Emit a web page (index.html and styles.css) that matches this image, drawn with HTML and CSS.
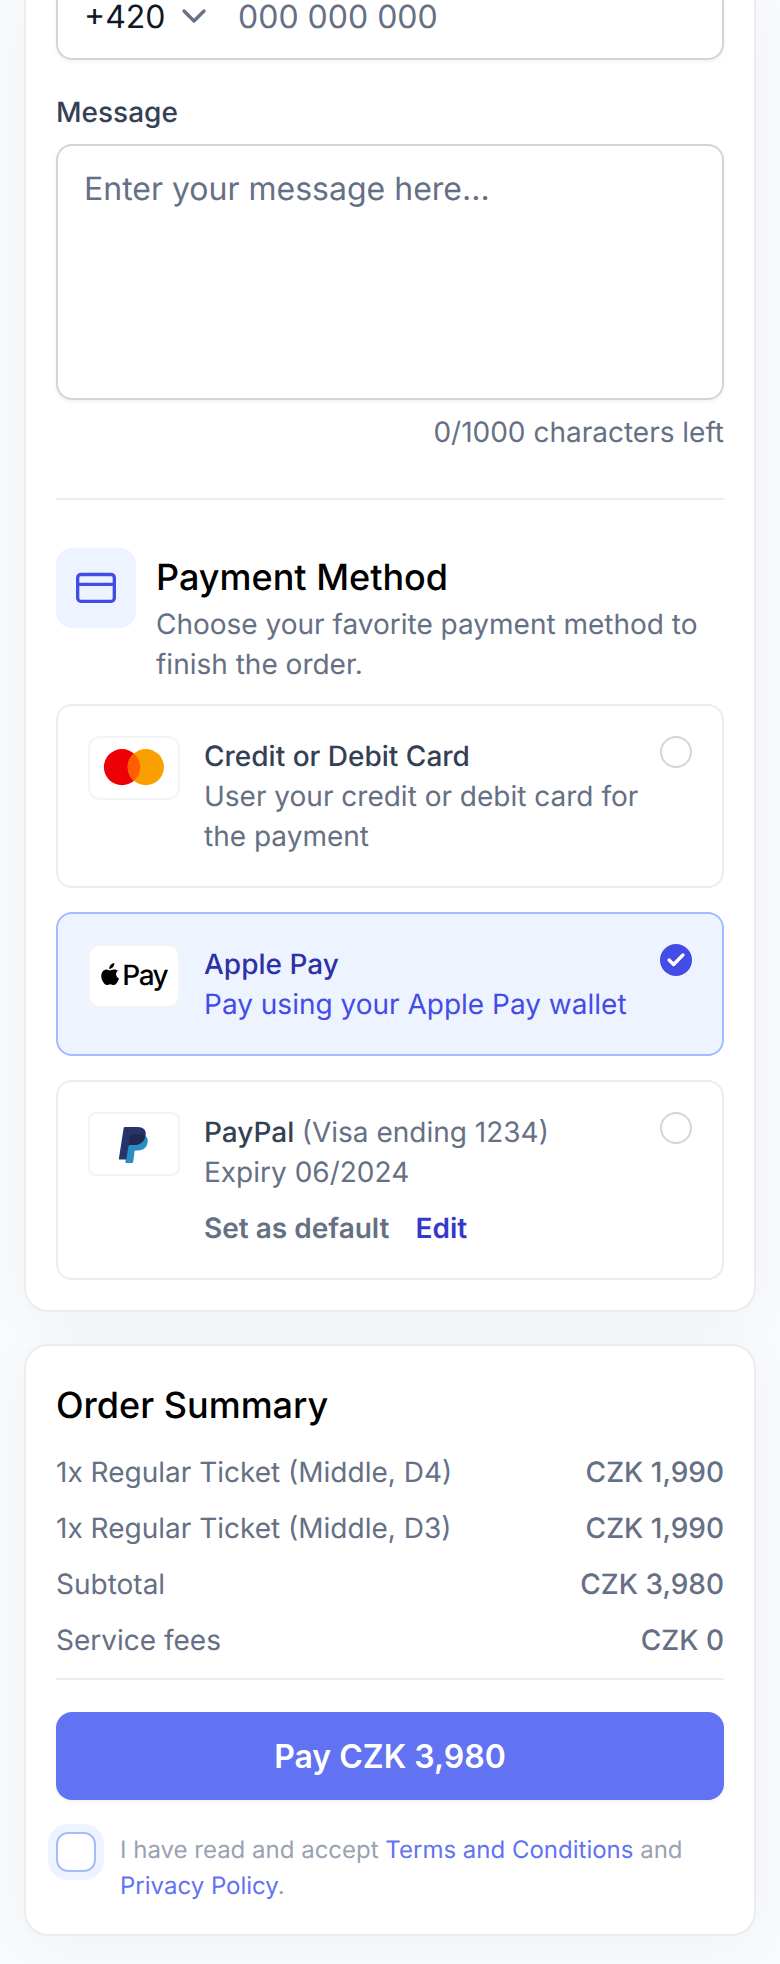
FILE: index.html
```html
<!DOCTYPE html>
<html lang="en">
<head>
<meta charset="utf-8">
<title>Checkout</title>
<link rel="stylesheet" href="styles.css">
</head>
<body>
<main class="page">
  <section class="card card-details">
    <div class="phone">
      <span class="phone-code">+420</span>
      <svg class="phone-chevron" width="40" height="40" viewBox="0 0 20 20" fill="none"><path d="M5 7.5l5 5 5-5"/></svg>
      <span class="phone-number">000 000 000</span>
    </div>
    <label class="label">Message</label>
    <div class="message">Enter your message here...</div>
    <p class="counter">0/1000 characters left</p>
    <hr class="divider">

    <header class="method-head">
      <span class="method-icon">
        <svg width="40" height="40" viewBox="0 0 40 40" fill="none"><rect x="1.67" y="6.5" width="36.66" height="26.8" rx="3.2"/><path d="M1.67 16.4h36.66"/></svg>
      </span>
      <div>
        <h2 class="title">Payment Method</h2>
        <p class="text">Choose your favorite payment method to finish the order.</p>
      </div>
    </header>

    <div class="options">
      <div class="option">
        <svg class="badge" viewBox="0 0 92 64">
          <rect class="badge-box" x="1" y="1" width="90" height="62" rx="11"/>
          <circle cx="34" cy="31.1" r="18.1" fill="#ed0006"/>
          <circle cx="57.8" cy="31.1" r="18.1" fill="#f9a000"/>
          <path d="M45.9 17.4a18.1 18.1 0 0 1 0 27.4a18.1 18.1 0 0 1 0-27.4z" fill="#ff5e00"/>
        </svg>
        <div class="option-body">
          <p class="option-name">Credit or Debit Card</p>
          <p class="text">User your credit or debit card for the payment</p>
        </div>
        <span class="radio"></span>
      </div>

      <div class="option option-selected">
        <svg class="badge" viewBox="0 0 92 64">
          <rect class="badge-box" x="1" y="1" width="90" height="62" rx="11"/>
          <path d="M26.3 19c.2 1.500-.4 3-1.300 4.100-.9 1.100-2.300 1.900-3.700 1.800-.2-1.400.5-2.900 1.300-3.900.9-1.100 2.500-1.900 3.700-2zM30.200 26.500c-1 .6-2.200 1.900-2.100 4 0 2.500 2 3.600 2.900 4-.4 1.500-1.200 3-2.100 4.300-.9 1.300-1.800 2.300-3.200 2.300-1.400 0-1.800-.8-3.500-.8-1.600 0-2.100.8-3.500.8-1.300 0-2.300-1.200-3.200-2.500-1.800-2.600-3.200-7.300-1.300-10.400.9-1.600 2.500-2.600 4.300-2.600 1.400 0 2.600.9 3.500.9.800 0 2.300-1.100 4-.9 1.700 0 3.300.6 4.200 1.900z"/>
          <text class="badge-text" x="34.300" y="41">Pay</text>
        </svg>
        <div class="option-body">
          <p class="option-name">Apple Pay</p>
          <p class="text">Pay using your Apple Pay wallet</p>
        </div>
        <span class="radio">
          <svg width="32" height="32" viewBox="0 0 32 32" fill="none"><path d="M9.100 16l4.500 4.500 9.300-9.500"/></svg>
        </span>
      </div>

      <div class="option">
        <svg class="badge" viewBox="0 0 92 64">
          <rect class="badge-box" x="1" y="1" width="90" height="62" rx="7"/>
          <g transform="translate(3.9 1.4) scale(.935 .907)">
            <path d="M56.700 24.500c2.400 1.500 3.500 4.100 2.900 7.500-1.100 6.200-5.200 8.900-11.300 8.900h-1c-.9 0-1.600.6-1.700 1.500l-1.500 11.200c-.1.700-.6 1.200-1.300 1.200h-6.100c-.6 0-1-.5-.9-1.100l2.700-18z" fill="#298fc2"/>
            <path d="M35.500 15h13.300c6.200 0 9.600 3.300 8.700 9.200-1 7.200-5.500 10.600-12.600 10.600h-4c-1 0-1.700.6-1.900 1.600l-2.200 14.500h-7c-.6 0-1-.5-.9-1.100l5-33.100c.1-1 .8-1.700 1.600-1.700z" fill="#27346a"/>
            <path d="M43.100 22.900h9.800c1.500 0 2.800.4 3.800 1.200-.9 7.400-5.300 10.700-11.800 10.700h-4c-1 0-1.700.4-2 1.200l1.700-11.200c.2-1.200 1.200-1.900 2.500-1.900z" fill="#22284f"/>
          </g>
        </svg>
        <div class="option-body">
          <p class="option-name">PayPal <span class="option-note">(Visa ending 1234)</span></p>
          <p class="text">Expiry 06/2024</p>
          <div class="actions"><a class="action">Set as default</a><a class="action action-edit">Edit</a></div>
        </div>
        <span class="radio"></span>
      </div>
    </div>
  </section>

  <section class="card card-summary">
    <h2 class="title">Order Summary</h2>
    <dl class="rows">
      <div class="row"><dt>1x Regular Ticket (Middle, D4)</dt><dd>CZK 1,990</dd></div>
      <div class="row"><dt>1x Regular Ticket (Middle, D3)</dt><dd>CZK 1,990</dd></div>
      <div class="row"><dt>Subtotal</dt><dd>CZK 3,980</dd></div>
      <div class="row"><dt>Service fees</dt><dd>CZK 0</dd></div>
    </dl>
    <button class="pay" type="button">Pay CZK 3,980</button>
    <div class="terms">
      <span class="checkbox"></span>
      <p class="terms-text">I have read and accept <a class="link">Terms and Conditions</a> and <a class="link">Privacy Policy</a>.</p>
    </div>
  </section>
</main>
</body>
</html>
```

FILE: styles.css
```css
* { box-sizing: border-box; margin: 0; padding: 0; }

body {
  background: #f9fafc;
  color: #667085;
  font: 400 28px/40px Inter, "Liberation Sans", sans-serif;
  text-rendering: geometricPrecision;
}

.page {
  display: flex;
  flex-direction: column;
  gap: 32px;
  height: 1964px;
  padding: 0 24px;
  overflow: hidden;
}

.card {
  background: #fff;
  border: 2px solid #eaecf0;
  border-radius: 24px;
  box-shadow: 0 8px 60px rgba(16, 24, 40, 0.035);
}

.card-details {
  height: 1312px;
  padding: 0 30px 30px;
  border-top: 0;
  border-radius: 0 0 24px 24px;
}

.card-summary { height: 592px; padding: 30px; }

/* Form fields */
.phone {
  display: flex;
  align-items: flex-start;
  height: 60px;
  padding: 0 26px;
  border: 2px solid #d0d5dd;
  border-top: 0;
  border-radius: 0 0 16px 16px;
  box-shadow: 0 2px 4px rgba(16, 24, 40, 0.05);
  font-size: 32px;
  line-height: 34px;
}
.phone-code { width: 90px; color: #101828; }
.phone-chevron { margin: -4px 24px 0 0; stroke: #667085; stroke-width: 1.67; stroke-linecap: round; stroke-linejoin: round; }

.label { display: block; margin-top: 32px; color: #344054; font-weight: 500; }
.message {
  height: 256px;
  margin-top: 12px;
  padding: 19px 26px;
  border: 2px solid #d0d5dd;
  border-radius: 16px;
  box-shadow: 0 2px 4px rgba(16, 24, 40, 0.05);
  font-size: 32px;
  line-height: 48px;
}
.counter { margin-top: 12px; text-align: right; }
.divider { margin: 46px 0 48px; border: 0; border-top: 2px solid #eaecf0; }

/* Payment method */
.method-head { display: flex; gap: 20px; }
.method-icon {
  display: flex;
  flex: none;
  align-items: center;
  justify-content: center;
  width: 80px;
  height: 80px;
  border-radius: 16px;
  background: #eef4ff;
}
.method-icon svg { stroke: #444ce7; stroke-width: 3.33; stroke-linecap: round; }
.title { height: 56px; color: #000; font-size: 36px; font-weight: 500; line-height: 58px; }

.options { display: flex; flex-direction: column; gap: 24px; margin-top: 20px; }
.option { display: flex; padding: 30px; border: 2px solid #eaecf0; border-radius: 16px; }
.option-body { flex: 1; margin: 0 16px 0 24px; }
.option-name { color: #344054; font-weight: 500; }
.option-note { color: #667085; font-weight: 400; }
.option-selected { background: #eef4ff; border-color: #a4bcfd; color: #444ce7; }
.option-selected .option-name { color: #2d31a6; }

.badge { flex: none; width: 92px; height: 64px; }
.badge-box { fill: #fff; stroke: #f2f4f7; stroke-width: 2; }
.badge-text { font: 500 28px Inter, sans-serif; letter-spacing: -1.5px; }

.radio { flex: none; width: 32px; height: 32px; border: 2px solid #d0d5dd; border-radius: 50%; }
.option-selected .radio { border: 0; background: #444ce7; }
.radio svg { display: block; stroke: #fff; stroke-width: 3.4; stroke-linecap: round; stroke-linejoin: round; }

.actions { display: flex; gap: 26px; margin-top: 16px; }
.action { font-weight: 600; }
.action-edit { color: #3538cd; }

/* Order summary */
.rows {
  display: flex;
  flex-direction: column;
  gap: 16px;
  margin-top: 20px;
  padding-bottom: 18px;
  border-bottom: 2px solid #eaecf0;
}
.row { display: flex; justify-content: space-between; }
.row dd { font-weight: 500; }

.pay {
  display: block;
  width: 100%;
  height: 88px;
  margin-top: 32px;
  padding-top: 2px;
  border: 0;
  border-radius: 16px;
  background: #6172f3;
  box-shadow: 0 2px 4px rgba(16, 24, 40, 0.05);
  color: #fff;
  font: 600 32px/48px Inter, sans-serif;
}

.terms { display: flex; gap: 24px; margin-top: 32px; }
.checkbox {
  flex: none;
  width: 40px;
  height: 40px;
  border: 2px solid #a4bcfd;
  border-radius: 12px;
  background: #fff;
  box-shadow: 0 0 0 8px #eef4ff;
}
.terms-text { color: #98a2b3; font-size: 24px; line-height: 36px; }
.link { color: #6172f3; }
```
